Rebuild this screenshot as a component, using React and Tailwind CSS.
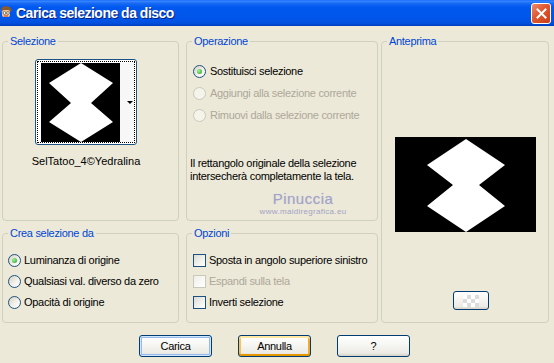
import React from 'react';

const Radio = ({ checked, disabled }) => (
  <span
    className={`w-[13px] h-[13px] shrink-0 rounded-full border flex items-center justify-center ${
      disabled
        ? 'border-[#cac8bb] bg-[#f5f4ea]'
        : 'border-[#1c5180] bg-[linear-gradient(135deg,#d6d2c2_0%,#f4f3ee_60%,#ffffff_100%)]'
    }`}
  >
    {checked && (
      <span className="w-[5px] h-[5px] rounded-full bg-[radial-gradient(circle_at_35%_35%,#9ff09a,#21a121)]" />
    )}
  </span>
);

const Check = ({ disabled }) => (
  <span
    className={`w-[13px] h-[13px] shrink-0 border ${
      disabled
        ? 'border-[#cac8bb] bg-[linear-gradient(135deg,#f0efe8,#ffffff)]'
        : 'border-[#1c5180] bg-[linear-gradient(135deg,#dcdcd7_0%,#f2f2ee_60%,#ffffff_100%)]'
    }`}
  />
);

const Group = ({ title, className, children }) => (
  <fieldset className={`border border-[#d0d0bf] rounded-[4px] ${className}`}>
    <legend className="ml-[5px] px-[2px] leading-[13px] text-[#0046d5]">{title}</legend>
    {children}
  </fieldset>
);

const Button = ({ children, variant }) => {
  const glow =
    variant === 'default'
      ? 'shadow-[inset_0_0_0_1px_#cee7ff,inset_0_0_0_2px_#98b8ea]'
      : variant === 'hot'
      ? 'shadow-[inset_0_2px_0_#ffe7a2,inset_0_-2px_0_#e59700,inset_2px_0_0_#fbc34f,inset_-2px_0_0_#f3a92a]'
      : '';
  return (
    <button
      className={`w-[73px] h-[22px] rounded-[3px] border border-[#003c74] bg-[linear-gradient(to_bottom,#ffffff_0%,#f7f7f4_40%,#ecebe5_85%,#d6d0c5_100%)] text-[11px] leading-[13px] text-black ${glow}`}
    >
      {children}
    </button>
  );
};

const Diamonds = ({ points }) => (
  <svg className="block w-full h-full" viewBox={points.box} preserveAspectRatio="none">
    <rect width="100%" height="100%" fill="#000" />
    <polygon points={points.poly} fill="#fff" />
  </svg>
);

const TitleBar = () => (
  <div className="h-[26px] flex items-center bg-[linear-gradient(to_bottom,#0a5fff_0px,#3d8bff_1px,#1a6cf4_3px,#0058ee_7px,#0056ea_18px,#0050de_23px,#003dbe_26px)]">
    <svg className="w-[14px] h-[14px] ml-[-1px] mt-[-2px]" viewBox="0 0 14 14">
      <path d="M2 3 L6 1 L11 2 L13 6 L10 7 L4 7 Z" fill="#8a5a2a" />
      <rect x="3" y="5" width="8" height="7" rx="2" fill="#f4c48c" />
      <circle cx="5.5" cy="8" r="1.4" fill="#fff" stroke="#333" strokeWidth="0.6" />
      <circle cx="9" cy="8" r="1.4" fill="#fff" stroke="#333" strokeWidth="0.6" />
      <path d="M5 11 L9 11" stroke="#c0392b" strokeWidth="1" />
      <path d="M1 4 L3 6 L2 9 Z" fill="#3b6fd8" />
    </svg>
    <span className="ml-[3px] text-[14px] font-bold leading-[16px] tracking-[-0.5px] text-white [text-shadow:1px_1px_0_#0a1e7a]">
      Carica selezione da disco
    </span>
    <div className="ml-auto mr-[3px] mt-[1px] w-[20px] h-[21px] rounded-[3px] border border-white bg-[linear-gradient(135deg,#f08a6a_0%,#e0562f_45%,#c8401a_100%)] flex items-center justify-center">
      <svg className="w-[11px] h-[11px]" viewBox="0 0 11 11">
        <path d="M1.5 1.5 L9.5 9.5 M9.5 1.5 L1.5 9.5" stroke="#fff" strokeWidth="2" strokeLinecap="square" />
      </svg>
    </div>
  </div>
);

const thumbShape = {
  box: '0 0 79 79',
  poly: '40,0 72,20 50,40 72,59 40,79 8,59 30,40 8,20',
};

const previewShape = {
  box: '0 0 141 95',
  poly: '71,2 110,28 84,48 110,69 71,95 32,69 58,48 32,28',
};

export default function App() {
  return (
    <div className="w-[554px] h-[363px] overflow-hidden bg-[#ece9d8] font-['Liberation_Sans',Arial,sans-serif] text-[11px] leading-[13px] tracking-[-0.3px] text-black select-none">
      <TitleBar />

      <div className="flex pl-[2px] pt-[9px]">
        {/* left column */}
        <div className="flex flex-col w-[177px] gap-[6px]">
          <Group title="Selezione" className="h-[186px]">
            <div className="flex flex-col items-center w-[110px] ml-[28px] mt-[11px]">
              <div className="w-[102px] h-[86px] rounded-[3px] border border-[#1c5180] bg-white p-[1px]">
                <div className="flex h-full border border-dotted border-black pl-[3px] pt-[1px]">
                  <div className="w-[79px] h-[79px]">
                    <Diamonds points={thumbShape} />
                  </div>
                  <div className="flex-1 flex items-center justify-end pr-[1px] bg-[#f7f7f7]">
                    <span className="w-0 h-0 border-l-[3px] border-r-[3px] border-t-[3px] border-l-transparent border-r-transparent border-t-black" />
                  </div>
                </div>
              </div>
              <div className="mt-[10px] whitespace-nowrap tracking-normal">SelTatoo_4©Yedralina</div>
            </div>
          </Group>

          <Group title="Crea selezione da" className="h-[96px]">
            <div className="mt-[10px] pl-[5px]">
              <div className="h-[21px] flex items-center gap-[3px]">
                <Radio checked />
                <span>Luminanza di origine</span>
              </div>
              <div className="h-[21px] flex items-center gap-[3px]">
                <Radio />
                <span>Qualsiasi val. diverso da zero</span>
              </div>
              <div className="h-[21px] flex items-center gap-[3px]">
                <Radio />
                <span>Opacità di origine</span>
              </div>
            </div>
          </Group>
        </div>

        {/* middle column */}
        <div className="flex flex-col w-[192px] ml-[7px] gap-[6px]">
          <Group title="Operazione" className="h-[186px]">
            <div className="mt-[12px] pl-[6px]">
              <div className="h-[22px] flex items-center gap-[4px]">
                <Radio checked />
                <span>Sostituisci selezione</span>
              </div>
              <div className="h-[22px] flex items-center gap-[4px] text-[#aca899]">
                <Radio disabled />
                <span>Aggiungi alla selezione corrente</span>
              </div>
              <div className="h-[22px] flex items-center gap-[4px] text-[#aca899]">
                <Radio disabled />
                <span>Rimuovi dalla selezione corrente</span>
              </div>
            </div>
            <p className="mt-[31px] pl-[3px] leading-[13px]">
              Il rettangolo originale della selezione
              <br />
              intersecherà completamente la tela.
            </p>
            <div className="flex flex-col items-center w-[110px] ml-[61px] mt-[9px] text-[#a3a3c6] tracking-normal">
              <span className="text-[15px] leading-[14px] tracking-[0.5px] [text-shadow:0_0_1px_#c8c8dc]">Pinuccia</span>
              <span className="mt-[1px] text-[8px] leading-[9px] tracking-[0.3px]">www.maidiregrafica.eu</span>
            </div>
          </Group>

          <Group title="Opzioni" className="h-[96px]">
            <div className="mt-[10px] pl-[6px] whitespace-nowrap">
              <div className="h-[21px] flex items-center gap-[3px]">
                <Check />
                <span>Sposta in angolo superiore sinistro</span>
              </div>
              <div className="h-[21px] flex items-center gap-[3px] text-[#aca899]">
                <Check disabled />
                <span>Espandi sulla tela</span>
              </div>
              <div className="h-[21px] flex items-center gap-[3px]">
                <Check />
                <span>Inverti selezione</span>
              </div>
            </div>
          </Group>
        </div>

        {/* right column */}
        <Group title="Anteprima" className="w-[168px] h-[288px] ml-[3px]">
          <div className="w-[141px] h-[95px] mx-auto mt-[89px]">
            <Diamonds points={previewShape} />
          </div>
          <div className="ml-[71px] mt-[59px] w-[36px] h-[19px] rounded-[3px] border border-[#003c74] bg-[linear-gradient(to_bottom,#ffffff,#ecebe5_85%,#d6d0c5)] flex items-center justify-center">
            <div className="grid grid-cols-[repeat(4,4px)] grid-rows-[repeat(3,4px)]">
              <span className="bg-white" />
              <span className="bg-[#dcdcdc]" />
              <span className="bg-white" />
              <span className="bg-[#dcdcdc]" />
              <span className="bg-[#dcdcdc]" />
              <span className="bg-white" />
              <span className="bg-[#dcdcdc]" />
              <span className="bg-white" />
              <span className="bg-white" />
              <span className="bg-[#dcdcdc]" />
              <span className="bg-white" />
              <span className="bg-[#dcdcdc]" />
            </div>
          </div>
        </Group>
      </div>

      <div className="flex pl-[139px] gap-[26px] mt-[12px]">
        <Button variant="default">Carica</Button>
        <Button variant="hot">Annulla</Button>
        <Button>?</Button>
      </div>
    </div>
  );
}
